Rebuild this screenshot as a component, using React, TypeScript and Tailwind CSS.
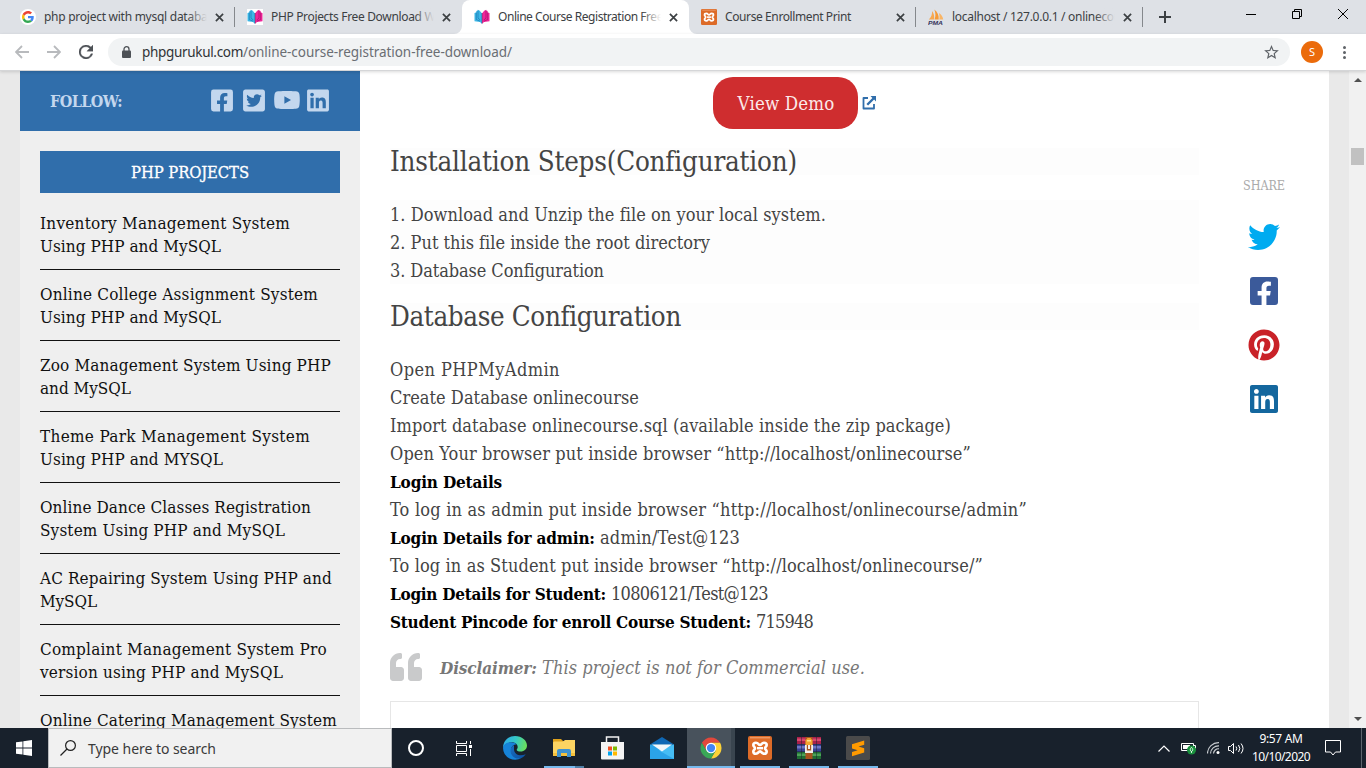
import { useLayoutEffect, useRef, useState, type ReactNode } from "react";
import {
  FaFacebookSquare,
  FaLinkedin,
  FaPinterest,
  FaQuoteLeft,
  FaTwitter,
  FaTwitterSquare,
  FaYoutube,
} from "react-icons/fa";

/** One line of text, tracked so that it fills the given width. */
function Fit({ w, className = "", children }: { w: number; className?: string; children: string }) {
  const ref = useRef<HTMLSpanElement>(null);
  const [spacing, setSpacing] = useState(0);
  useLayoutEffect(() => {
    const el = ref.current;
    if (!el) return;
    el.style.letterSpacing = "0.001px";
    const natural = el.getBoundingClientRect().width;
    const s = (w - natural) / children.length;
    el.style.letterSpacing = `${s}px`;
    setSpacing(s);
  }, [w, children]);
  return (
    <span ref={ref} className={`inline-block whitespace-pre ${className}`} style={{ letterSpacing: spacing }}>
      {children}
    </span>
  );
}

function GoogleIcon() {
  return (
    <span className="flex size-4 items-center justify-center rounded-full bg-white">
      <svg viewBox="0 0 48 48" className="size-[12px]">
        <path fill="#EA4335" d="M24 9.5c3.54 0 6.71 1.22 9.21 3.6l6.85-6.85C35.9 2.38 30.47 0 24 0 14.62 0 6.51 5.38 2.56 13.22l7.98 6.19C12.43 13.72 17.74 9.5 24 9.5z" />
        <path fill="#4285F4" d="M46.98 24.55c0-1.57-.15-3.09-.38-4.55H24v9.02h12.94c-.58 2.96-2.26 5.48-4.78 7.18l7.73 6c4.51-4.18 7.09-10.36 7.09-17.65z" />
        <path fill="#FBBC05" d="M10.53 28.59A14.5 14.5 0 0 1 9.77 24c0-1.6.27-3.14.76-4.59l-7.98-6.19A23.9 23.9 0 0 0 0 24c0 3.88.92 7.54 2.56 10.78l7.97-6.19z" />
        <path fill="#34A853" d="M24 48c6.48 0 11.93-2.13 15.89-5.81l-7.73-6c-2.15 1.45-4.92 2.3-8.16 2.3-6.26 0-11.57-4.22-13.47-9.91l-7.98 6.19C6.51 42.62 14.62 48 24 48z" />
      </svg>
    </span>
  );
}

function BookIcon() {
  return (
    <svg viewBox="0 0 16 16" className="size-4">
      <rect width="16" height="16" fill="#fff" />
      <path d="M.5 4l1.800-.6V2l1.500-.4V.7l2 1.100L7.600 4v10.500L6 13l-5.500-.8z" fill="#3db7e6" />
      <path d="M2.300 3.400v7.100l3.700 1.700M4 1.600v7.600L6.300 11M7.500 4v10.500" fill="none" stroke="#1878b4" strokeWidth=".7" />
      <path d="M15.500 4l-1.800-.6V2l-1.500-.4V.7l-2 1.100L8.400 4v10.500L10 13l5.500-.8z" fill="#f0259a" />
      <path d="M13.700 3.400v7.100L10 12.200M12 1.600v7.600L9.700 11M8.500 4v10.500" fill="none" stroke="#a80f6c" strokeWidth=".7" />
    </svg>
  );
}

function XamppIcon({ className }: { className: string }) {
  return (
    <svg viewBox="0 0 24 24" className={className}>
      <rect width="24" height="24" rx="2" fill="#dd6b28" />
      <path d="M2 1.800h20" stroke="#f3b48b" strokeWidth=".9" />
      <path
        d="M8 6.700c2.600 0 2.200 2.300 4 2.300s1.400-2.300 4-2.300c1.700 0 2.700 1 2.700 2.300 0 1.800-1.700 1.600-1.700 3.200s1.700 1.400 1.700 3.200c0 1.300-1 2.300-2.700 2.300-2.600 0-2.200-2.300-4-2.300s-1.400 2.300-4 2.300c-1.700 0-2.700-1-2.700-2.300 0-1.800 1.700-1.600 1.700-3.200S5.300 10.800 5.300 9c0-1.300 1-2.300 2.700-2.300z"
        fill="#e2702b"
        stroke="#fff"
        strokeWidth="2.600"
        strokeLinejoin="round"
      />
      <path d="M9 12.200h6" stroke="#fff" strokeWidth="2.400" />
    </svg>
  );
}

function PmaIcon() {
  return (
    <svg viewBox="0 0 16 16" className="size-4">
      <path d="M.8 10.500C3.500 8 4.300 5 4 2c2 2.500 2.600 5.600 2 8.500z" fill="#f7a850" />
      <path d="M6.500 10.500C8 7 7.500 3.500 6.300.5c3.400 2.500 4.700 6 4.400 10z" fill="#f79a35" />
      <path d="M11.300 10.500c.5-2.500.2-4.500-.5-6.500 2.800 1.500 4.200 4 4.400 6.500z" fill="#f9b566" />
      <text x="0" y="15.600" fontSize="6" fontWeight="bold" fontStyle="italic" fontFamily="Liberation Sans, sans-serif" fill="#34345c" textLength="15" lengthAdjust="spacingAndGlyphs">
        PMA
      </text>
    </svg>
  );
}

function Cross() {
  return (
    <svg viewBox="0 0 10 10" className="size-[9px] shrink-0">
      <path d="M1 1l8 8M9 1L1 9" stroke="#3c4043" strokeWidth="1.900" />
    </svg>
  );
}

function Tab({ icon, label, w, fade = true, active = false, line = false }: { icon: ReactNode; label: string; w: number; fade?: boolean; active?: boolean; line?: boolean }) {
  return (
    <div className={`relative flex h-[34px] w-[227px] shrink-0 items-center pl-3 ${active ? "rounded-t-lg bg-white" : ""}`}>
      <span className="flex w-4 shrink-0">{icon}</span>
      <span className="relative ml-2 h-5 w-[163px] overflow-hidden text-[12px] leading-5 text-[#3c4043]">
        <Fit w={w}>{label}</Fit>
        {fade && (
          <span className={`absolute inset-y-0 right-0 w-5 bg-gradient-to-r from-transparent ${active ? "to-white" : "to-[#dee1e6]"}`} />
        )}
      </span>
      <span className="ml-2 flex">
        <Cross />
      </span>
      {line && <span className="absolute top-[7px] right-0 h-5 w-px bg-[#85888c]" />}
      {active && (
        <>
          <svg className="absolute bottom-0 -left-2 size-2" viewBox="0 0 8 8">
            <path d="M8 0v8H0a8 8 0 0 0 8-8z" fill="#fff" />
          </svg>
          <svg className="absolute -right-2 bottom-0 size-2" viewBox="0 0 8 8">
            <path d="M0 0v8h8a8 8 0 0 1-8-8z" fill="#fff" />
          </svg>
        </>
      )}
    </div>
  );
}

function TabStrip() {
  return (
    <div className="flex h-[34px] bg-[#dee1e6] pl-2">
      <Tab icon={<GoogleIcon />} label="php project with mysql databas" w={169} line />
      <Tab icon={<BookIcon />} label="PHP Projects Free Download Wi" w={167} />
      <Tab icon={<BookIcon />} label="Online Course Registration Free" w={165} active />
      <Tab icon={<XamppIcon className="size-4" />} label="Course Enrollment Print" w={126} fade={false} line />
      <Tab icon={<PmaIcon />} label="localhost / 127.0.0.1 / onlinecou" w={169} line />
      <div className="flex flex-1 items-center pl-4">
        <svg viewBox="0 0 12 12" className="size-3">
          <path d="M6 0v12M0 6h12" stroke="#3c4043" strokeWidth="2" />
        </svg>
        <div className="ml-auto flex h-[34px] items-start gap-[36px] pt-[9px] pr-[18px]">
          <svg viewBox="0 0 10 10" className="size-[10px]">
            <path d="M0 5.500h10" stroke="#000" />
          </svg>
          <svg viewBox="0 0 10 10" className="size-[10px]">
            <path d="M.5 2.500h7v7h-7zM2.500 2.500v-2h7v7h-2" fill="none" stroke="#000" />
          </svg>
          <svg viewBox="0 0 10 10" className="size-[10px]">
            <path d="M0 0l10 10M10 0L0 10" stroke="#000" />
          </svg>
        </div>
      </div>
    </div>
  );
}

function Toolbar() {
  return (
    <div className="relative z-10 flex h-[37px] items-center border-b border-[#d5d6d8] bg-white pl-[15px] shadow-[0_1px_3px_rgba(0,0,0,0.15)]">
      <svg viewBox="0 0 14 14" className="size-[14px]">
        <path d="M14 7H1.500M7 1L1 7l6 6" fill="none" stroke="#b8babd" strokeWidth="1.800" />
      </svg>
      <svg viewBox="0 0 14 14" className="ml-[18px] size-[14px]">
        <path d="M0 7h12.500M7 1l6 6-6 6" fill="none" stroke="#b8babd" strokeWidth="1.800" />
      </svg>
      <svg viewBox="4 4 16 16" className="ml-[18px] size-[14px]">
        <path d="M17.650 6.350A8 8 0 1 0 19.730 14h-2.080A6 6 0 1 1 12 6c1.660 0 3.140.69 4.220 1.780L13 11h7V4z" fill="#4d5156" stroke="#4d5156" strokeWidth=".4" />
      </svg>
      <div className="ml-[15px] flex h-7 w-[1182px] items-center rounded-full bg-[#f1f3f4] pl-[14px]">
        <svg viewBox="0 0 9 12" className="h-[12px] w-[9px]">
          <path d="M2 5V3.200a2.500 2.500 0 0 1 5 0V5" fill="none" stroke="#4d5156" strokeWidth="1.300" />
          <rect y="4.500" width="9" height="7.500" rx="1" fill="#4d5156" />
        </svg>
        <span className="ml-[11px] flex text-[13.500px] leading-5">
          <Fit w={101} className="text-[#303337]">phpgurukul.com</Fit>
          <Fit w={269} className="text-[#6a6e73]">/online-course-registration-free-download/</Fit>
        </span>
        <svg viewBox="2 2 20 19" className="mr-[11px] ml-auto h-[14px] w-[15px]">
          <path d="M22 9.240l-7.190-.62L12 2 9.190 8.630 2 9.240l5.460 4.730L5.820 21 12 17.270 18.180 21l-1.630-7.030zM12 15.400l-3.760 2.270 1-4.280-3.320-2.880 4.380-.38L12 6.100l1.710 4.040 4.380.38-3.320 2.880 1 4.280z" fill="#5f6368" />
        </svg>
      </div>
      <span className="ml-[11px] flex size-[22px] items-center justify-center rounded-full bg-[#eb6b0b] text-[11px] text-white">S</span>
      <span className="ml-[20px] flex flex-col gap-[2px]">
        <span className="size-[3px] rounded-full bg-[#5f6368]" />
        <span className="size-[3px] rounded-full bg-[#5f6368]" />
        <span className="size-[3px] rounded-full bg-[#5f6368]" />
      </span>
    </div>
  );
}

const projects: [string, number, string?, number?][] = [
  ["Inventory Management System", 250, "Using PHP and MySQL", 181],
  ["Online College Assignment System", 278, "Using PHP and MySQL", 181],
  ["Zoo Management System Using PHP", 291, "and MySQL", 91],
  ["Theme Park Management System", 270, "Using PHP and MYSQL", 183],
  ["Online Dance Classes Registration", 271, "System Using PHP and MySQL", 245],
  ["AC Repairing System Using PHP and", 292, "MySQL", 57],
  ["Complaint Management System Pro", 287, "version using PHP and MySQL", 243],
  ["Online Catering Management System", 297],
];

function Sidebar() {
  return (
    <aside className="w-[340px] shrink-0 bg-[#efefef]">
      <div className="flex h-[60px] items-center bg-[#306eab] pr-[30px] pl-[30px] text-[#c3d7ee]">
        <Fit w={72} className="pt-px text-[16px] font-bold">FOLLOW:</Fit>
        <div className="ml-auto flex items-center pb-[2px]">
          <FaFacebookSquare className="h-[25px] w-[24px]" />
          <FaTwitterSquare className="ml-[8px] h-[25px] w-[24px]" />
          <FaYoutube className="ml-[7px] h-[24px] w-[28px]" />
          <FaLinkedin className="ml-[5px] h-[25px] w-[24px]" />
        </div>
      </div>
      <div className="px-5 pt-5">
        <h3 className="flex h-[42px] items-center justify-center bg-[#306eab] text-[16.500px] text-white">
          <Fit w={118} className="pt-[2px] [-webkit-text-stroke:0.3px_white]">PHP PROJECTS</Fit>
        </h3>
        <ul className="mt-[6px] text-[17px] leading-[23px] text-[#111]">
          {projects.map(([a, aw, b, bw]) => (
            <li key={a} className="flex h-[71px] flex-col items-start border-b border-[#111] pt-[13px]">
              <Fit w={aw}>{a}</Fit>
              {b && bw && <Fit w={bw}>{b}</Fit>}
            </li>
          ))}
        </ul>
      </div>
    </aside>
  );
}

function Article() {
  return (
    <main className="ml-[30px] w-[809px] shrink-0 pt-[6px] text-[18px] leading-7 text-[#444]">
      <div className="flex h-[52px] items-center justify-center">
        <span className="flex h-[52px] w-[145px] items-center justify-center rounded-[20px] bg-[#cf2d2f] pt-px pl-px text-[18.500px] text-[#fbe9e9]">
          <Fit w={97}>View Demo</Fit>
        </span>
        <svg viewBox="0 0 14 14" className="ml-[4px] size-[14px]">
          <path d="M6 2H1.500v10.500H12V8" fill="none" stroke="#306eab" strokeWidth="1.800" strokeLinejoin="round" />
          <path d="M8.500 0H14v5.500l-1.900-1.900-6 6-1.700-1.700 6-6z" fill="#306eab" />
        </svg>
      </div>
      <h2 className="mt-[19px] flex h-[27px] items-center bg-[#fdfdfd] text-[27.500px] leading-[27px] text-[#444]">
        <Fit w={407}>Installation Steps(Configuration)</Fit>
      </h2>
      <div className="mt-[25px] flex h-[84px] flex-col items-start bg-[#fdfdfd] pt-px">
        <Fit w={436}>1. Download and Unzip the file on your local system.</Fit>
        <Fit w={320}>2. Put this file inside the root directory</Fit>
        <Fit w={214}>3. Database Configuration</Fit>
      </div>
      <h2 className="mt-[19px] flex h-[27px] items-center bg-[#fdfdfd] text-[27.500px] leading-[27px] text-[#444]">
        <Fit w={291}>Database Configuration</Fit>
      </h2>
      <div className="mt-[26px] flex flex-col items-start">
        <Fit w={170}>Open PHPMyAdmin</Fit>
        <Fit w={249}>Create Database onlinecourse</Fit>
        <Fit w={561}>Import database onlinecourse.sql (available inside the zip package)</Fit>
        <Fit w={581}>Open Your browser put inside browser “http://localhost/onlinecourse”</Fit>
        <Fit w={112} className="text-[17px] font-bold text-black">Login Details</Fit>
        <Fit w={637}>To log in as admin put inside browser “http://localhost/onlinecourse/admin”</Fit>
        <p className="flex h-7">
          <Fit w={210} className="text-[17px] font-bold text-black">Login Details for admin: </Fit>
          <Fit w={140}>admin/Test@123</Fit>
        </p>
        <Fit w={593}>To log in as Student put inside browser “http://localhost/onlinecourse/”</Fit>
        <p className="flex h-7">
          <Fit w={221} className="text-[17px] font-bold text-black">Login Details for Student: </Fit>
          <Fit w={157}>10806121/Test@123</Fit>
        </p>
        <p className="flex h-7">
          <Fit w={366} className="text-[17px] font-bold text-black">Student Pincode for enroll Course Student: </Fit>
          <Fit w={57}>715948</Fit>
        </p>
      </div>
      <blockquote className="mt-[17px] flex h-7 items-center text-[#777] italic">
        <FaQuoteLeft className="size-8 text-[#c9cacb]" />
        <Fit w={102} className="ml-[18px] pt-[2px] text-[17px] font-bold">Disclaimer: </Fit>
        <Fit w={323} className="pt-[2px]">This project is not for Commercial use.</Fit>
      </blockquote>
      <div className="mt-5 h-[60px] border border-[#e6e6e6]" />
    </main>
  );
}

function Share() {
  return (
    <div className="ml-[35px] flex w-[60px] flex-col items-center pt-[105px]">
      <Fit w={42} className="text-[12.500px] leading-5 text-[#aaa]">SHARE</Fit>
      <div className="mt-[25px] flex flex-col items-center gap-[22px]">
        <FaTwitter className="size-8 text-[#00abf0]" />
        <FaFacebookSquare className="size-8 text-[#3b5a9a]" />
        <FaPinterest className="size-8 text-[#c92228]" />
        <FaLinkedin className="size-8 text-[#14679e]" />
      </div>
    </div>
  );
}

function Scrollbar() {
  return (
    <div className="flex w-[17px] shrink-0 flex-col items-center bg-[#f1f1f1] py-[7px]">
      <svg viewBox="0 0 8 4" className="h-1 w-2">
        <path d="M0 4l4-4 4 4z" fill="#505050" />
      </svg>
      <div className="mt-[66px] h-[17px] w-[13px] bg-[#c1c1c1]" />
      <svg viewBox="0 0 8 4" className="mt-auto h-1 w-2">
        <path d="M0 0l4 4 4-4z" fill="#505050" />
      </svg>
    </div>
  );
}

function EdgeIcon() {
  return (
    <svg viewBox="0 0 24 24" className="size-6">
      <defs>
        <linearGradient id="edgeTop" x1="0" x2="1" y1="0.3" y2="0.5">
          <stop offset="0" stopColor="#2eabe8" />
          <stop offset=".5" stopColor="#35c9c7" />
          <stop offset="1" stopColor="#6be05a" />
        </linearGradient>
        <linearGradient id="edgeLow" x1="0" x2="1" y1="0" y2="1">
          <stop offset="0" stopColor="#1b6fc0" />
          <stop offset="1" stopColor="#0b4fa0" />
        </linearGradient>
      </defs>
      <path d="M0 12C0 5 5 0 12 0c7 0 12 4.500 12 9.500 0 3.600-2.800 6-6.300 6-2.600 0-4-.8-4-1.800 0-.7 1-1.100 1-2.700C14.700 8.200 12 6.300 8.500 6.300 4.500 6.300 1 8.500 0 12z" fill="url(#edgeTop)" />
      <path d="M0 12c.6-3.700 4-5.700 8.300-5.700 2.200 0 4.200.8 5.300 2.200-3.200-.3-5.600 2.200-5.600 5.500 0 4.500 3.700 8 8.300 8 .8 0 1.700-.1 2.500-.4A12 12 0 0 1 0 12z" fill="#1683d8" />
      <path d="M11 9.200c-2.400 1-3.500 3-3.500 5.300 0 5.200 4.500 9 9.800 7.900 2.400-.7 4.300-2.300 5.400-4.200-5.500 2.600-11.700.5-11.700-5.200z" fill="url(#edgeLow)" />
    </svg>
  );
}

function ExplorerIcon() {
  return (
    <svg viewBox="0 0 22 20" className="h-5 w-[22px]">
      <path d="M0 1h8l2 2h12v15H0z" fill="#e0a21c" />
      <path d="M1 3.500h9L12 2h10v16H0V4.500z" fill="#fcd462" />
      <path d="M0 15h22v3H0z" fill="#f6c13c" />
      <path d="M4 19v-6a2 2 0 0 1 2-2h10a2 2 0 0 1 2 2v6h-4v-4H8v4z" fill="#3f92cf" />
    </svg>
  );
}

function StoreIcon() {
  return (
    <svg viewBox="0 0 23 24" className="mr-[2px] h-6 w-[23px]">
      <path d="M5.500 7V1h12v6" fill="none" stroke="#f2f2f2" strokeWidth="1.500" />
      <path d="M0 6h23v16.500a1 1 0 0 1-1 1H1a1 1 0 0 1-1-1z" fill="#f4f4f4" />
      <path d="M7 10.500h4v4H7z" fill="#f25022" />
      <path d="M12 10.500h4v4h-4z" fill="#7fba00" />
      <path d="M7 15.500h4v4H7z" fill="#00a4ef" />
      <path d="M12 15.500h4v4h-4z" fill="#ffb900" />
    </svg>
  );
}

function MailIcon() {
  return (
    <svg viewBox="0 0 24 22" className="h-[22px] w-6">
      <path d="M0 7.500L12 0l12 7.500z" fill="#0f68b5" />
      <path d="M0 7.500h24V22H0z" fill="#2ba3e8" />
      <path d="M24 7.500V22L9 13.500z" fill="#46bdf4" />
      <path d="M2 7.500h20l-10 7z" fill="#f2f7fb" />
    </svg>
  );
}

function ChromeIcon() {
  return (
    <svg viewBox="0 0 48 48" className="size-[22px]">
      <path d="M4.100 12.500A23 23 0 0 1 43.900 12.500H24L14 29.750z" fill="#e2483c" />
      <path d="M43.900 12.500A23 23 0 0 1 24 47L34 29.750 24 12.500z" fill="#fdd237" />
      <path d="M4.100 12.500A23 23 0 0 0 24 47L34 29.750H14z" fill="#3aa757" />
      <circle cx="24" cy="24" r="11.500" fill="#fff" />
      <circle cx="24" cy="24" r="9" fill="#4285f4" />
    </svg>
  );
}

function WinrarIcon() {
  return (
    <svg viewBox="0 0 24 22" className="h-[22px] w-6">
      <path d="M0 0h24v7H0z" fill="#a8214a" />
      <path d="M0 1.500h24V4H0z" fill="#d8486e" />
      <path d="M0 7.500h24v7H0z" fill="#3a4396" />
      <path d="M0 9h24v2.500H0z" fill="#6d76c4" />
      <path d="M0 15h24v7H0z" fill="#1f6d33" />
      <path d="M0 16.500h24V19H0z" fill="#4ca358" />
      <path d="M4 0h1v22H4zM19 0h1v22h-1z" fill="#20242d" opacity=".5" />
      <path d="M8.500 0h7v22h-7z" fill="#a9531f" />
      <path d="M8.500 3.500l2-2.500h3l2 2.500V8h-7z" fill="#f4a52e" />
      <path d="M10 3h4v1.500h-4z" fill="#fde08a" />
      <path d="M8 8h1.800v5.500h4.400V8H16v8H8z" fill="#f1efe9" />
      <path d="M11 8h2v4h-2z" fill="#f1efe9" />
    </svg>
  );
}

function SublimeIcon() {
  return (
    <svg viewBox="0 0 24 24" className="size-6">
      <rect width="24" height="24" rx="1.500" fill="#4a4a4a" />
      <path d="M6 8.300L18.200 4.500v4.200L12.500 10.500l5.700 1.800v4.200L6 20.300v-4.200l5.700-1.900L6 12.400z" fill="#ff9a00" />
    </svg>
  );
}

function TaskButton({ children, open = false, active = false, stacked = false }: { children: ReactNode; open?: boolean; active?: boolean; stacked?: boolean }) {
  return (
    <div className={`relative mr-px flex h-10 w-12 items-center justify-center ${active ? "border-r-[4px] border-[#3a454f] bg-[#48525c] pl-1" : ""}`}>
      {children}
      {open && <span className={`absolute bottom-0 h-[2px] bg-[#76b9ed] ${active ? "-right-1 left-0" : "inset-x-1"}`} />}
      {stacked && <span className="absolute right-1 bottom-0 h-[2px] w-[9px] bg-[#4f7fa6]" />}
    </div>
  );
}

function Taskbar() {
  return (
    <footer className="flex h-10 shrink-0 items-center bg-[#18212c]">
      <div className="flex w-12 justify-center">
        <svg viewBox="0 0 16 16" className="size-4">
          <path d="M0 2.300L6.500 1.400v6.200H0zM7.300 1.300L16 0v7.600H7.300zM0 8.400h6.500v6.200L0 13.700zM7.300 8.400H16V16l-8.700-1.300z" fill="#fff" />
        </svg>
      </div>
      <div className="flex h-10 w-[344px] items-center border border-[#b9bbbd] bg-[#f1f1f1] pl-[11px] text-[#3a3a3a]">
        <svg viewBox="0 0 16 16" className="size-4">
          <circle cx="10.500" cy="5.500" r="4.900" fill="none" stroke="#222" strokeWidth="1.200" />
          <path d="M7 9L.5 15.500" stroke="#222" strokeWidth="1.200" />
        </svg>
        <Fit w={128} className="ml-3 pt-px text-[14px] leading-5">Type here to search</Fit>
      </div>
      <div className="flex w-12 justify-center">
        <span className="size-4 rounded-full border-2 border-white" />
      </div>
      <div className="mr-[3px] flex w-12 justify-center">
        <svg viewBox="0 0 16 15" className="h-[15px] w-4">
          <path d="M.5 0v2.500h10V0M.5 4.500h10v6H.5zM.5 15v-2.500h10V15M14.500 0v3M14.500 8v7" fill="none" stroke="#fff" />
          <path d="M13 4h3v3h-3z" fill="#fff" />
        </svg>
      </div>
      <TaskButton><EdgeIcon /></TaskButton>
      <TaskButton open stacked><ExplorerIcon /></TaskButton>
      <TaskButton><StoreIcon /></TaskButton>
      <TaskButton><MailIcon /></TaskButton>
      <TaskButton open active><ChromeIcon /></TaskButton>
      <TaskButton open><XamppIcon className="size-6" /></TaskButton>
      <TaskButton open><WinrarIcon /></TaskButton>
      <TaskButton open><SublimeIcon /></TaskButton>
      <div className="ml-auto flex h-10 items-center text-white">
        <svg viewBox="0 0 12 7" className="h-[7px] w-3">
          <path d="M.5 6.500L6 1l5.500 5.500" fill="none" stroke="#fff" strokeWidth="1.200" />
        </svg>
        <svg viewBox="0 0 16 14" className="ml-[11px] h-[14px] w-4">
          <path d="M.5 2.500h12v7H.5zM13 4.500h1.500v3" fill="none" stroke="#fff" />
          <path d="M2 4h7v4H2z" fill="#fff" />
          <circle cx="10.500" cy="9" r="4.500" fill="#19913d" />
          <path d="M10.500 6.300c1.700 1.700 1.700 3.400 0 4.400-1.700-1-1.700-2.700 0-4.400zM10.500 10v2" fill="none" stroke="#fff" strokeWidth=".8" />
        </svg>
        <svg viewBox="0 0 13 12" className="ml-[10px] h-3 w-[13px]">
          <path d="M.5 11.500A11 11 0 0 1 12 .7M3.500 11.500A8 8 0 0 1 12 3.800M6.500 11.500A5 5 0 0 1 12 6.800" fill="none" stroke="#c9cdd1" strokeWidth="1.200" />
          <circle cx="11" cy="10.500" r="1.500" fill="#fff" />
        </svg>
        <svg viewBox="0 0 17 13" className="ml-[8px] h-[13px] w-[17px]">
          <path d="M.5 4.500h2l3-3v10l-3-3h-2zM8 4.500q1.500 2 0 4M10.500 3q2.700 3.500 0 7M13 1.500q4 5 0 10" fill="none" stroke="#fff" />
        </svg>
        <div className="ml-[6px] flex w-[60px] flex-col items-center text-[12px] leading-[18px]">
          <Fit w={43}>9:57 AM</Fit>
          <Fit w={58}>10/10/2020</Fit>
        </div>
        <svg viewBox="0 0 16 16" className="ml-[14px] size-4">
          <path d="M.5.5h15v11.500h-5L8 15l-2.500-3h-5z" fill="none" stroke="#fff" />
        </svg>
        <span className="mr-1 ml-[20px] h-10 w-px bg-[#5c646c]" />
      </div>
    </footer>
  );
}

export default function App() {
  return (
    <div className="flex h-[768px] w-[1366px] flex-col overflow-hidden bg-white [font-family:'Noto_Sans','Open_Sans',sans-serif]">
      <TabStrip />
      <Toolbar />
      <div className="flex min-h-0 flex-1 overflow-hidden bg-[#e9e9e9] pl-5">
        <div className="flex w-[1309px] shrink-0 overflow-hidden bg-white [font-family:'DejaVu_Serif_Condensed','DejaVu_Serif',serif]">
          <Sidebar />
          <Article />
          <Share />
        </div>
        <div className="w-5 shrink-0" />
        <Scrollbar />
      </div>
      <Taskbar />
    </div>
  );
}
